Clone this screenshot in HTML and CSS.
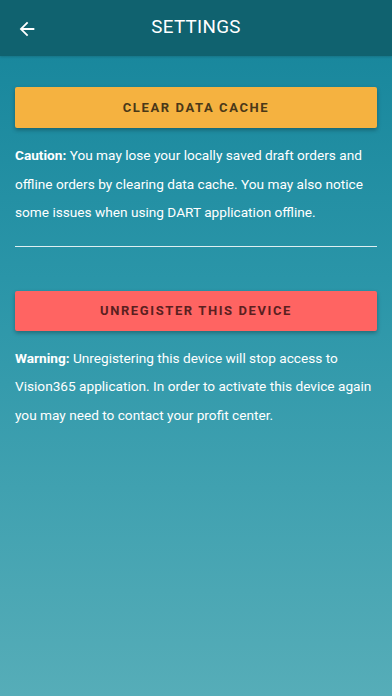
FILE: index.html
```html
<!DOCTYPE html>
<html>
<head>
<meta charset="utf-8">
<link rel="stylesheet" href="styles.css">
</head>
<body>
<div class="app">
  <header class="topbar">
    <span class="back">
      <svg width="22" height="22" viewBox="0 0 24 24"><path d="M20 11H7.83l5.59-5.59L12 4l-8 8 8 8 1.41-1.41L7.83 13H20v-2z" fill="#fff"/></svg>
    </span>
    <h1 class="title">SETTINGS</h1>
  </header>
  <main class="content">
    <button class="btn btn-yellow">CLEAR DATA CACHE</button>
    <p class="note"><b>Caution:</b> You may lose your locally saved draft orders and offline orders by clearing data cache. You may also notice some issues when using DART application offline.</p>
    <hr class="divider">
    <button class="btn btn-red">UNREGISTER THIS DEVICE</button>
    <p class="note"><b>Warning:</b> Unregistering this device will stop access to Vision365 application. In order to activate this device again you may need to contact your profit center.</p>
  </main>
</div>
</body>
</html>
```

FILE: styles.css
```css
html, body {
  margin: 0;
  padding: 0;
  height: 100%;
}
body {
  font-family: Roboto, "Liberation Sans", sans-serif;
  color: #fff;
}
.app {
  min-height: 696px;
  background: linear-gradient(to bottom, #15849a 0%, #2a95a8 40%, #56adb8 100%);
  display: flex;
  flex-direction: column;
}
.topbar {
  height: 56px;
  background: #10626f;
  display: flex;
  align-items: center;
  justify-content: center;
  position: relative;
  box-shadow: 0 1px 2px rgba(0,0,0,0.15);
}
.back {
  position: absolute;
  left: 16px;
  top: 18px;
  display: flex;
}
.title {
  margin: 0;
  font-size: 18.8px;
  font-weight: 400;
  letter-spacing: 0.3px;
  margin-top: -3px;
}
.content {
  padding: 31px 15px 0 15px;
  display: flex;
  flex-direction: column;
}
.btn {
  border: none;
  border-radius: 2px;
  height: 41px;
  font-family: Roboto, "Liberation Sans", sans-serif;
  font-weight: 700;
  font-size: 13px;
  letter-spacing: 1.6px;
  box-shadow: 0 2px 4px rgba(0,0,0,0.3);
  padding: 0;
}
.btn-yellow {
  background: #f5b240;
  color: #4a3818;
}
.btn-red {
  background: #ff6462;
  color: #5a2020;
  height: 40px;
}
.note {
  margin: 13px 0 0 0;
  font-size: 13.65px;
  line-height: 28.5px;
}
.note b {
  font-weight: 700;
}
.divider {
  border: none;
  height: 1px;
  background: rgba(255,255,255,0.85);
  margin: 19px 0 44px 0;
}
```
